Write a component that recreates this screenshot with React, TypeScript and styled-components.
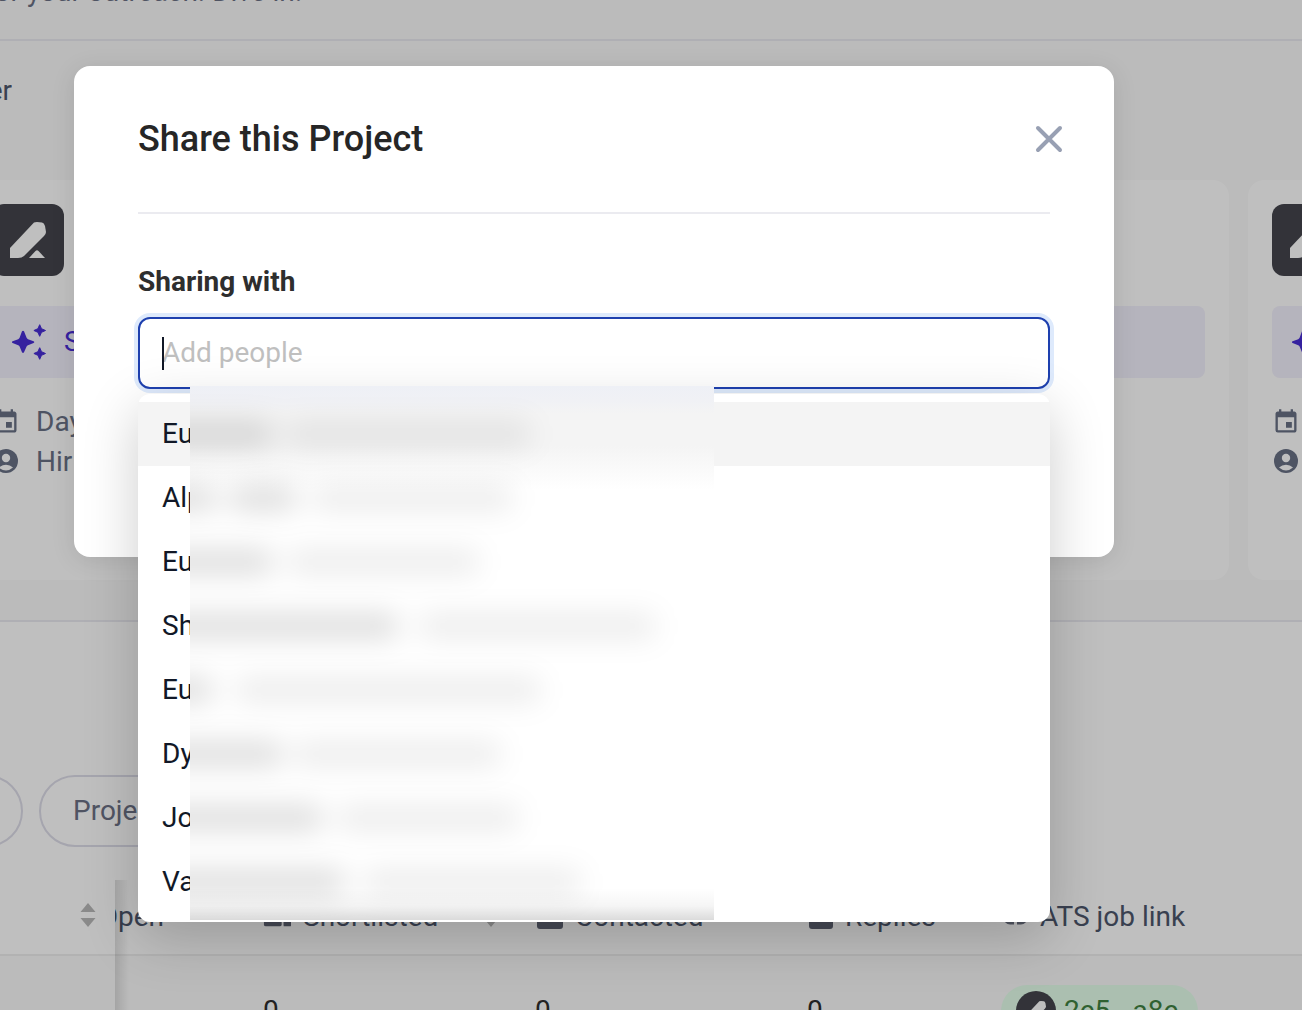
import React from "react";
import styled, { createGlobalStyle } from "styled-components";
import { MdEvent } from "react-icons/md";

const GlobalStyle = createGlobalStyle`
  * { box-sizing: border-box; }
  body {
    margin: 0;
    overflow: hidden;
    font-family: Roboto, "Liberation Sans", sans-serif;
    font-size: 28px;
    line-height: 40px;
    color: #4d566b;
  }
  button, input { font: inherit; }
`;

const Screen = styled.div`
  position: relative;
  height: 100vh;
  overflow: hidden;
  background: #fafafa;
`;

const Banner = styled.header`
  margin-top: -28px;
  padding-bottom: 27px;
  border-bottom: 2px solid #eaeaf1;
  color: #6b7085;
`;

const TrailingText = styled.div<{ $width: number }>`
  display: flex;
  justify-content: flex-end;
  width: ${(p) => p.$width}px;
  overflow: hidden;
  white-space: nowrap;
`;

const Toolbar = styled.div`
  padding: 30px 0 69px;
`;

const CardStrip = styled.div`
  display: flex;
  gap: 19px;
  margin: 0 0 40px -32px;
`;

const Card = styled.article`
  flex: 0 0 621px;
  min-height: 400px;
  padding: 24px;
  border-radius: 16px;
  background: #fff;
`;

const Badge = styled.div`
  width: 72px;
  height: 72px;
  border-radius: 12px;
  background: #44454d;
  color: #fff;
`;

const SuggestButton = styled.button`
  display: flex;
  align-items: center;
  gap: 16px;
  width: 100%;
  height: 72px;
  margin: 30px 0 24px;
  padding: 0 20px;
  border: 0;
  border-radius: 8px;
  background: #f2f0fc;
  color: #472cd5;
`;

const Meta = styled.div`
  display: flex;
  align-items: center;
  gap: 16px;
  height: 40px;
  color: #687085;
`;

const Projects = styled.section`
  padding-top: 153px;
  border-top: 2px solid #eaeaf1;
  background: #fff;
`;

const Filters = styled.div`
  display: flex;
  gap: 16px;
  margin: 0 0 33px -100px;
`;

const FilterButton = styled.button`
  min-width: 123px;
  height: 72px;
  padding: 0 32px;
  border: 2px solid #dddce8;
  border-radius: 36px;
  background: transparent;
  color: #6b7085;
  text-align: left;

  &:last-child { min-width: 240px; }
`;

const Table = styled.table`
  width: 100%;
  border-collapse: separate;
  border-spacing: 0;
  table-layout: fixed;
  text-align: left;
`;

const HeadCell = styled.th<{ $width?: number }>`
  width: ${(p) => (p.$width ? `${p.$width}px` : "auto")};
  height: 76px;
  padding: 0 0 0 24px;
  border-bottom: 2px solid #eeeeee;
  font-weight: 400;

  &:first-child { position: relative; }
  &:nth-child(2) { padding: 0; }
  &:nth-child(n + 4) { padding-left: 26px; }
`;

const Cell = styled.td`
  height: 110px;
  padding: 0 0 0 24px;
  background: #fafafa;
  color: #2e2e2e;

  &:first-child { position: relative; }
`;

const EdgeShadow = styled.span`
  position: absolute;
  top: 0;
  bottom: -2px;
  left: 100%;
  width: 14px;
  background: linear-gradient(to right, rgba(0, 0, 0, 0.12), rgba(0, 0, 0, 0));
`;

const HeadContent = styled.div<{ $end?: boolean }>`
  display: flex;
  align-items: center;
  justify-content: ${(p) => (p.$end ? "flex-end" : "flex-start")};
  gap: 12px;
  padding-right: ${(p) => (p.$end ? 19 : 0)}px;
  padding-bottom: ${(p) => (p.$end ? 4 : 0)}px;

  svg { flex: none; }
`;

const SortSlot = styled.span`
  display: flex;
  margin-left: auto;
  padding: 0 12px 4px 0;
`;

const LinkPill = styled.a`
  display: inline-flex;
  align-items: center;
  gap: 8px;
  height: 52px;
  padding: 0 20px 0 15px;
  border-radius: 26px;
  background: #e4ffeb;
  color: #3f8242;
  text-decoration: none;
  vertical-align: middle;
`;

const RoundBadge = styled.span`
  display: flex;
  width: 40px;
  height: 40px;
  border-radius: 50%;
  background: #44454d;
  color: #fff;
`;

const Overlay = styled.div`
  position: absolute;
  inset: 0;
  padding: 66px 188px 0 74px;
  background: rgba(0, 0, 0, 0.25);
`;

const Modal = styled.section`
  min-height: 491px;
  padding: 48px 64px;
  border-radius: 16px;
  background: #fff;
  box-shadow: 0 4px 24px rgba(0, 0, 0, 0.1);
`;

const ModalHeader = styled.header`
  display: flex;
  align-items: center;
  justify-content: space-between;
  height: 100px;
  padding-bottom: 48px;
  border-bottom: 2px solid #ebebf0;
`;

const Title = styled.h2`
  margin: 0;
  color: #262626;
  font-size: 36px;
  font-weight: 500;
`;

const CloseButton = styled.button`
  display: flex;
  margin-right: -15px;
  padding: 0;
  border: 0;
  background: none;
  color: #98a0b3;
`;

const FieldLabel = styled.label`
  display: block;
  margin: 48px 0 15px;
  color: #2e2e2e;
  font-weight: 700;
`;

const Field = styled.div`
  position: relative;
`;

const PeopleInput = styled.input`
  display: block;
  width: 100%;
  height: 72px;
  padding: 0 22px 2px;
  border: 2px solid #1e40af;
  border-radius: 12px;
  outline: none;
  background: #fff;
  box-shadow: 0 0 0 4px #deeafc;
  color: #111827;
  caret-color: transparent;

  &::placeholder { color: #bfbfbf; opacity: 1; }
`;

const Caret = styled.span`
  position: absolute;
  top: 20px;
  left: 24px;
  width: 2px;
  height: 33px;
  background: #111827;
`;

const Menu = styled.div`
  position: absolute;
  top: 77px;
  left: 0;
  right: 0;
  border-radius: 12px;
  background: #fff;
  box-shadow: 0 16px 56px rgba(0, 0, 0, 0.2);
`;

const People = styled.ul`
  margin: 0;
  padding: 8px 0;
  list-style: none;
`;

const Person = styled.li<{ $active: boolean }>`
  display: flex;
  align-items: center;
  height: 64px;
  padding: 0 24px;
  background: ${(p) => (p.$active ? "#f4f4f4" : "transparent")};
  color: #111827;
`;

const Redaction = styled.div`
  position: absolute;
  top: -8px;
  bottom: 2px;
  left: 52px;
  width: 524px;
  padding-top: 16px;
  overflow: hidden;
  background:
    linear-gradient(to top, rgba(0, 0, 0, 0.14), rgba(0, 0, 0, 0.04) 14px, rgba(0, 0, 0, 0) 32px),
    linear-gradient(to bottom, #eef0f6, #f0f1f5 14px, #f4f4f4 28px, #f4f4f4 60px, #fff 104px);
`;

const SmearRow = styled.div`
  display: flex;
  align-items: center;
  height: 64px;
  margin-left: -32px;
  filter: blur(14px);
`;

const Smear = styled.span<{ $strong?: boolean }>`
  height: 24px;
  border-radius: 8px;
  background: ${(p) => (p.$strong ? "rgba(0,0,0,0.14)" : "rgba(0,0,0,0.08)")};
`;

function Pencil({ size }: { size: number }) {
  return (
    <svg width={size} height={size} viewBox="0 0 72 72" fill="currentColor" aria-hidden="true">
      <path d="M18 44 42 18.6Q43 18 45 18L50 18.6Q52 19 53 22L54 28Q54 30 52 32L32 52Q30 54 26 54H18Z" />
      <path d="M37 54 43.5 47Q45 45.6 46.500 47L53 54Z" />
    </svg>
  );
}

function Sparkles() {
  return (
    <svg width="36" height="36" viewBox="0 0 36 36" fill="currentColor" aria-hidden="true">
      <path d="M10 7.200Q11 6.200 12 7.200L14.600 13.800Q15 14.800 16 15.200L21.600 17.200Q23 18 21.600 19L16 21.200Q15 21.600 14.600 22.600L12 28.200Q11 29.600 10 28.200L7.600 22.600Q7.200 21.600 6.200 21.200L.6 19Q-.8 18 .6 17.200L6.200 15.200Q7.200 14.800 7.600 13.800Z" />
      <path d="M27.700.7 29.500 4.700 33.500 6.500 29.500 8.300 27.700 12.300 25.900 8.300 21.900 6.500 25.900 4.700Z" stroke="currentColor" strokeLinejoin="round" />
      <path d="M27.700 23.700 29.500 27.700 33.500 29.500 29.500 31.300 27.700 35.300 25.900 31.300 21.900 29.500 25.900 27.700Z" stroke="currentColor" strokeLinejoin="round" />
    </svg>
  );
}

function ProfileIcon() {
  return (
    <svg width="28" height="28" viewBox="0 0 28 28" aria-hidden="true">
      <circle cx="14" cy="13" r="12" fill="currentColor" />
      <circle cx="14" cy="10" r="4.200" fill="#fff" />
      <path d="M7 19.600Q10 16.800 14 16.800T21 19.600Q18 22.400 14 22.400T7 19.600Z" fill="#fff" />
    </svg>
  );
}

function SortArrows() {
  return (
    <svg width="16" height="26" viewBox="0 0 16 26" fill="#b9b9b9" aria-hidden="true">
      <path d="M8 1 15.500 10H.5ZM8 25 15.500 16H.5Z" />
    </svg>
  );
}

function ListIcon() {
  return (
    <svg width="28" height="28" viewBox="0 0 30 28" fill="#5e6272" aria-hidden="true">
      <rect x="1" y="4" width="19" height="20" rx="2" />
      <rect x="22" y="4" width="8" height="20" rx="1" />
    </svg>
  );
}

function MailIcon({ width }: { width: number }) {
  return (
    <svg width={width} height="28" viewBox={`0 0 ${width} 28`} aria-hidden="true">
      <rect y="4" width={width} height="22" rx="3" fill="#5e6272" />
      <path d={`M3 8 ${width / 2} 15 ${width - 3} 8`} stroke="#fff" strokeWidth="2" fill="none" />
    </svg>
  );
}

function ChainIcon() {
  return (
    <svg width="25" height="28" viewBox="0 0 25 28" fill="none" stroke="#6b7080" strokeWidth="3" aria-hidden="true">
      <path d="M11 10H7a5 5 0 0 0 0 10h4M14 10h4a5 5 0 0 1 0 10h-4M8 15h9" />
    </svg>
  );
}

function CloseIcon() {
  return (
    <svg width="32" height="32" viewBox="0 0 32 32" fill="none" stroke="currentColor" strokeWidth="4" strokeLinecap="round" aria-hidden="true">
      <path d="M5 5 27 27M27 5 5 27" />
    </svg>
  );
}

interface CardText {
  action?: string;
  day?: string;
  hiring?: string;
}

const cards: CardText[] = [{ action: "S", day: "Day", hiring: "Hir" }, {}, {}];

const people: { name: string; smears: [number, number, boolean][] }[] = [
  { name: "Eu", smears: [[114, 14, true], [244, 0, false]] },
  { name: "Alp", smears: [[58, 14, true], [66, 16, true], [200, 0, false]] },
  { name: "Eu", smears: [[114, 16, true], [190, 0, false]] },
  { name: "Sh", smears: [[240, 22, true], [235, 0, false]] },
  { name: "Eu", smears: [[54, 24, true], [304, 0, false]] },
  { name: "Dy", smears: [[124, 12, true], [206, 0, false]] },
  { name: "Jo", smears: [[164, 16, true], [180, 0, false]] },
  { name: "Va", smears: [[186, 20, true], [216, 0, false]] },
];

function ProjectCard({ action, day, hiring }: CardText) {
  return (
    <Card>
      <Badge><Pencil size={72} /></Badge>
      <SuggestButton type="button" aria-label="Suggestions"><Sparkles />{action}</SuggestButton>
      <Meta><MdEvent size={28} />{day}</Meta>
      <Meta><ProfileIcon />{hiring}</Meta>
    </Card>
  );
}

function ProjectTable() {
  return (
    <Table>
      <thead>
        <tr>
          <HeadCell $width={115}>
            <HeadContent $end><SortArrows /></HeadContent>
            <EdgeShadow />
          </HeadCell>
          <HeadCell $width={124}><TrailingText $width={49}>Open</TrailingText></HeadCell>
          <HeadCell $width={272}>
            <HeadContent><ListIcon />Shortlisted<SortSlot><SortArrows /></SortSlot></HeadContent>
          </HeadCell>
          <HeadCell $width={272}><HeadContent><MailIcon width={26} />Contacted</HeadContent></HeadCell>
          <HeadCell $width={194}><HeadContent><MailIcon width={24} />Replies</HeadContent></HeadCell>
          <HeadCell><HeadContent><ChainIcon />ATS job link</HeadContent></HeadCell>
        </tr>
      </thead>
      <tbody>
        <tr>
          <Cell><EdgeShadow /></Cell>
          <Cell />
          <Cell>0</Cell>
          <Cell>0</Cell>
          <Cell>0</Cell>
          <Cell>
            <LinkPill href="#"><RoundBadge><Pencil size={40} /></RoundBadge>2e5...a8e</LinkPill>
          </Cell>
        </tr>
      </tbody>
    </Table>
  );
}

function ShareModal() {
  return (
    <Modal role="dialog" aria-labelledby="share-title">
      <ModalHeader>
        <Title id="share-title">Share this Project</Title>
        <CloseButton type="button" aria-label="Close"><CloseIcon /></CloseButton>
      </ModalHeader>
      <FieldLabel htmlFor="people">Sharing with</FieldLabel>
      <Field>
        <PeopleInput id="people" type="text" placeholder="Add people" />
        <Caret />
        <Menu>
          <People>
            {people.map((person, i) => (
              <Person key={i} $active={i === 0}>{person.name}</Person>
            ))}
          </People>
          <Redaction aria-hidden="true">
            {people.map((person, i) => (
              <SmearRow key={i}>
                {person.smears.map(([width, gap, strong], j) => (
                  <Smear key={j} $strong={strong} style={{ width, marginRight: gap }} />
                ))}
              </SmearRow>
            ))}
          </Redaction>
        </Menu>
      </Field>
    </Modal>
  );
}

export default function App() {
  return (
    <Screen>
      <GlobalStyle />
      <Banner><TrailingText $width={302}>for your outreach. Dive in!</TrailingText></Banner>
      <Toolbar><TrailingText $width={12}>er</TrailingText></Toolbar>
      <CardStrip>
        {cards.map((card, i) => <ProjectCard key={i} {...card} />)}
      </CardStrip>
      <Projects>
        <Filters>
          <FilterButton type="button" aria-label="Filter" />
          <FilterButton type="button">Proje</FilterButton>
        </Filters>
        <ProjectTable />
      </Projects>
      <Overlay><ShareModal /></Overlay>
    </Screen>
  );
}
